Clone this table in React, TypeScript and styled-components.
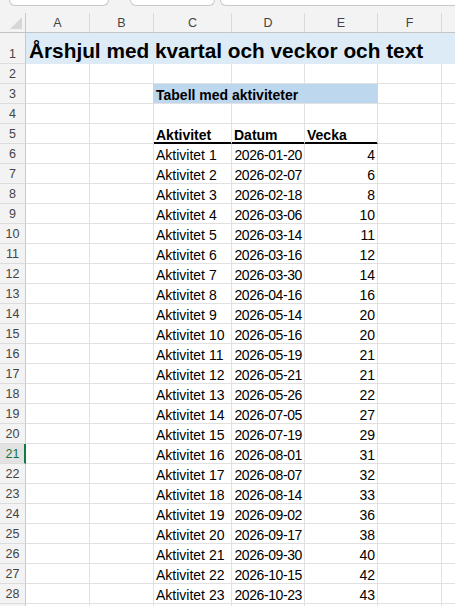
import React from "react";
import styled, { createGlobalStyle } from "styled-components";

const GlobalStyle = createGlobalStyle`
  html, body {
    margin: 0;
    padding: 0;
    background: #ffffff;
    overflow: hidden;
  }
  body {
    font-family: "Liberation Sans", Arial, sans-serif;
  }
`;

const Frame = styled.div`
  width: 455px;
  height: 606px;
  overflow: hidden;
  background: #ffffff;
  display: flex;
  flex-direction: column;
`;

const TopBar = styled.div`
  flex: 0 0 13px;
  height: 13px;
  background: #f3f3f3;
  display: flex;
  align-items: flex-start;
  overflow: hidden;
`;

const Box = styled.div<{ $w?: number; $ml: number }>`
  box-sizing: border-box;
  height: 6px;
  margin-left: ${(p) => p.$ml}px;
  ${(p) => (p.$w ? `flex: 0 0 ${p.$w}px;` : `flex: 1 0 auto; margin-right: -20px;`)}
  background: #ffffff;
  border: 1px solid #c8c8c8;
  border-top: none;
  border-radius: 0 0 6px 6px;
`;

const Row = styled.div<{ $h: number }>`
  display: flex;
  flex: 0 0 ${(p) => p.$h}px;
  height: ${(p) => p.$h}px;
  width: 100%;
`;

const Corner = styled.div`
  box-sizing: border-box;
  flex: 0 0 26px;
  height: 100%;
  background: #f3f3f3;
  border-right: 1px solid #c9c9c9;
  border-bottom: 1px solid #c4c4c4;
  position: relative;
`;

const ColHead = styled.div<{ $w: number }>`
  box-sizing: border-box;
  flex: 0 0 ${(p) => p.$w}px;
  height: 100%;
  background: #f3f3f3;
  border-right: 1px solid #dadada;
  border-bottom: 1px solid #c4c4c4;
  display: flex;
  align-items: center;
  justify-content: center;
  font-size: 12.5px;
  color: #444444;
  line-height: 16px;
  padding-top: 1px;
`;

const RowHead = styled.div<{ $active?: boolean }>`
  box-sizing: border-box;
  flex: 0 0 26px;
  height: 100%;
  background: ${(p) => (p.$active ? "#e2e2e2" : "#f3f3f3")};
  border-right: ${(p) => (p.$active ? "2px solid #137a44" : "1px solid #c9c9c9")};
  border-bottom: 1px solid #dcdcdc;
  display: flex;
  align-items: flex-end;
  justify-content: center;
  padding-bottom: 1px;
  padding-left: ${(p) => (p.$active ? "1px" : "0")};
  font-size: 12.5px;
  line-height: 16px;
  color: ${(p) => (p.$active ? "#127440" : "#444444")};
`;

const Cell = styled.div<{
  $w: number;
  $fill?: string;
  $right?: boolean;
  $bold?: boolean;
  $under?: boolean;
  $rb?: string;
  $tight?: boolean;
}>`
  box-sizing: border-box;
  flex: 0 0 ${(p) => p.$w}px;
  height: 100%;
  background: ${(p) => p.$fill || "#ffffff"};
  border-right: 1px solid ${(p) => p.$rb || "#e1e1e1"};
  border-bottom: 1px solid ${(p) => (p.$under ? "#000000" : "#e1e1e1")};
  box-shadow: ${(p) => (p.$under ? "inset 0 -1px 0 #000000" : "none")};
  display: flex;
  align-items: flex-end;
  justify-content: ${(p) => (p.$right ? "flex-end" : "flex-start")};
  padding: 0 2px;
  font-size: 14px;
  line-height: 16px;
  font-weight: ${(p) => (p.$bold ? 700 : 400)};
  letter-spacing: ${(p) => (p.$tight ? "-0.4px" : "0")};
  color: #000000;
  white-space: nowrap;
`;

const TitleCell = styled.div`
  box-sizing: border-box;
  flex: 1 0 auto;
  height: 100%;
  background: #ddebf7;
  display: flex;
  align-items: flex-end;
  padding: 0 0 0 3px;
  font-size: 20.8px;
  line-height: 26px;
  font-weight: 700;
  color: #000000;
  white-space: nowrap;
`;

const COLS = [
  { id: "A", w: 64 },
  { id: "B", w: 64 },
  { id: "C", w: 78 },
  { id: "D", w: 73 },
  { id: "E", w: 73 },
  { id: "F", w: 64 },
  { id: "", w: 40 },
];

const DATA: [string, number][] = [
  ["2026-01-20", 4],
  ["2026-02-07", 6],
  ["2026-02-18", 8],
  ["2026-03-06", 10],
  ["2026-03-14", 11],
  ["2026-03-16", 12],
  ["2026-03-30", 14],
  ["2026-04-16", 16],
  ["2026-05-14", 20],
  ["2026-05-16", 20],
  ["2026-05-19", 21],
  ["2026-05-21", 21],
  ["2026-05-26", 22],
  ["2026-07-05", 27],
  ["2026-07-19", 29],
  ["2026-08-01", 31],
  ["2026-08-07", 32],
  ["2026-08-14", 33],
  ["2026-09-02", 36],
  ["2026-09-17", 38],
  ["2026-09-30", 40],
  ["2026-10-15", 42],
  ["2026-10-23", 43],
];

const BLUE = "#bdd7ee";

const CornerMark = () => (
  <svg width="26" height="20" viewBox="0 0 26 20" style={{ position: "absolute", left: 0, top: 0 }}>
    <polygon points="22,4 22,16 10,16" fill="#d7d7d7" />
  </svg>
);

const EmptyTail = ({ from }: { from: number }) => (
  <>
    {COLS.slice(from).map((c, i) => (
      <Cell key={i} $w={c.w} />
    ))}
  </>
);

export default function App() {
  return (
    <Frame>
      <GlobalStyle />
      <TopBar>
        <Box $ml={9} $w={100} />
        <Box $ml={21} $w={85} />
        <Box $ml={5} />
      </TopBar>

      <Row $h={20}>
        <Corner>
          <CornerMark />
        </Corner>
        {COLS.map((c, i) => (
          <ColHead key={i} $w={c.w}>
            {c.id}
          </ColHead>
        ))}
      </Row>

      <Row $h={31}>
        <RowHead>1</RowHead>
        <TitleCell>Årshjul med kvartal och veckor och text</TitleCell>
      </Row>

      <Row $h={20}>
        <RowHead>2</RowHead>
        <EmptyTail from={0} />
      </Row>

      <Row $h={20}>
        <RowHead>3</RowHead>
        <Cell $w={64} />
        <Cell $w={64} $rb={BLUE} />
        <Cell $w={224} $fill={BLUE} $rb={BLUE} $bold>
          Tabell med aktiviteter
        </Cell>
        <EmptyTail from={5} />
      </Row>

      <Row $h={20}>
        <RowHead>4</RowHead>
        <EmptyTail from={0} />
      </Row>

      <Row $h={20}>
        <RowHead>5</RowHead>
        <Cell $w={64} />
        <Cell $w={64} />
        <Cell $w={78} $bold $under>
          Aktivitet
        </Cell>
        <Cell $w={73} $bold $under>
          Datum
        </Cell>
        <Cell $w={73} $bold $under>
          Vecka
        </Cell>
        <EmptyTail from={5} />
      </Row>

      {DATA.map(([date, week], i) => {
        const rowNo = i + 6;
        return (
          <Row $h={20} key={rowNo}>
            <RowHead $active={rowNo === 21}>{rowNo}</RowHead>
            <Cell $w={64} />
            <Cell $w={64} />
            <Cell $w={78}>Aktivitet {i + 1}</Cell>
            <Cell $w={73} $right $tight>
              {date}
            </Cell>
            <Cell $w={73} $right>
              {week}
            </Cell>
            <EmptyTail from={5} />
          </Row>
        );
      })}

      <Row $h={20}>
        <RowHead />
        <EmptyTail from={0} />
      </Row>
    </Frame>
  );
}
